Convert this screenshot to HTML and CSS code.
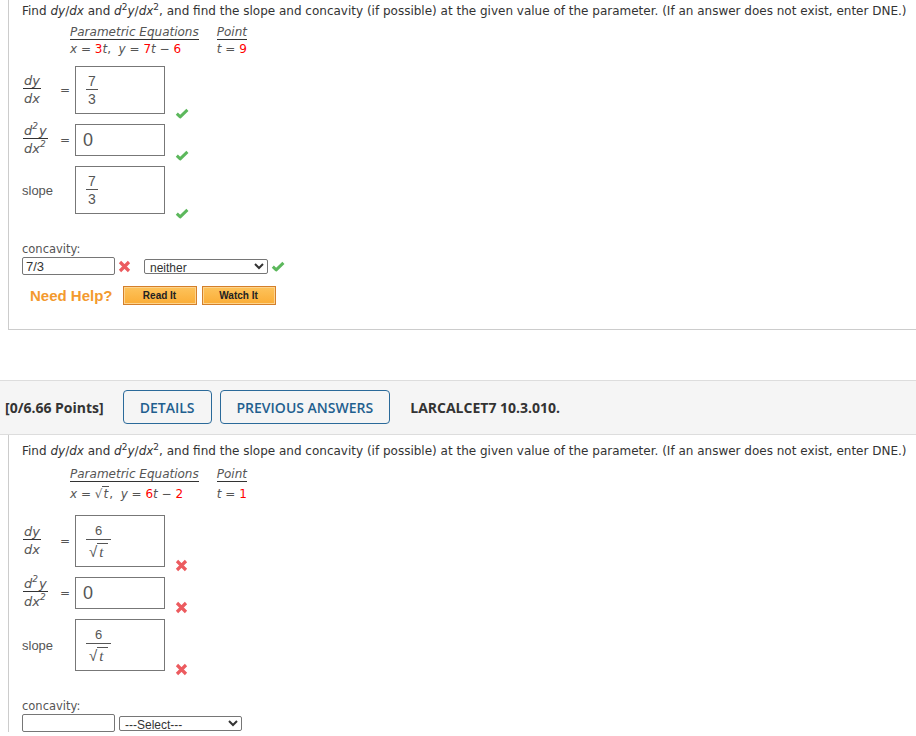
FILE: index.html
```html
<!DOCTYPE html>
<html lang="en">
<head>
  <meta charset="UTF-8">
  <meta name="viewport" content="width=device-width, initial-scale=1.0">
  <title>Parametric Equations</title>
  <link rel="stylesheet" href="styles.css">
</head>
<body>
  <!-- question 9 (answered) -->
  <div class="question first">
    <p class="prompt">Find <i>dy</i>/<i>dx</i> and <i>d</i><sup>2</sup><i>y</i>/<i>dx</i><sup>2</sup>, and find the slope and concavity (if possible) at the given value of the parameter. (If an answer does not exist, enter DNE.)</p>
    <div class="given">
      <span class="given-head">Parametric Equations</span>
      <span class="given-head">Point</span>
      <span class="given-val"><i>x</i> = <span class="red">3</span><i>t</i>,&nbsp; <i>y</i> = <span class="red">7</span><i>t</i> &minus; <span class="red">6</span></span>
      <span class="given-val"><i>t</i> = <span class="red">9</span></span>
    </div>

    <div class="answers">
      <div class="answer-row">
        <span class="label"><span class="frac"><span>dy</span><span class="den">dx</span></span></span>
        <span class="eq">=</span>
        <span class="box tall"><span class="box-frac"><span>7</span><span class="den">3</span></span></span>
        <span class="mark"><svg width="14" height="11" viewBox="0 0 14 11"><path d="M1.8 5.6 L5.2 8.8 L12.4 1.8" fill="none" stroke="#5cb85c" stroke-width="3" stroke-linejoin="round"/></svg></span>
      </div>
      <div class="answer-row">
        <span class="label"><span class="frac"><span>d<sup>2</sup>y</span><span class="den">dx<sup>2</sup></span></span></span>
        <span class="eq">=</span>
        <span class="box short"><span class="box-value">0</span></span>
        <span class="mark"><svg width="14" height="11" viewBox="0 0 14 11"><path d="M1.8 5.6 L5.2 8.8 L12.4 1.8" fill="none" stroke="#5cb85c" stroke-width="3" stroke-linejoin="round"/></svg></span>
      </div>
      <div class="answer-row">
        <span class="label slope">slope</span>
        <span class="box tall"><span class="box-frac"><span>7</span><span class="den">3</span></span></span>
        <span class="mark"><svg width="14" height="11" viewBox="0 0 14 11"><path d="M1.8 5.6 L5.2 8.8 L12.4 1.8" fill="none" stroke="#5cb85c" stroke-width="3" stroke-linejoin="round"/></svg></span>
      </div>
    </div>

    <div class="concavity">
      <div class="concavity-label">concavity:</div>
      <div class="concavity-row">
        <input class="text-input" type="text" value="7/3">
        <span class="cross"><svg width="13" height="13" viewBox="0 0 13 13"><path d="M2 2 L11 11 M11 2 L2 11" stroke="#ec5b5f" stroke-width="3.2"/></svg></span>
        <select class="select">
          <option>neither</option>
          <option>upward</option>
          <option>downward</option>
        </select>
        <span class="tick"><svg width="14" height="11" viewBox="0 0 14 11"><path d="M1.8 5.6 L5.2 8.8 L12.4 1.8" fill="none" stroke="#5cb85c" stroke-width="3" stroke-linejoin="round"/></svg></span>
      </div>
    </div>

    <div class="help">
      <span class="help-title">Need Help?</span>
      <button class="help-btn">Read It</button>
      <button class="help-btn">Watch It</button>
    </div>
  </div>

  <!-- question 10 header -->
  <div class="points-bar">
    <span class="points">[0/6.66 Points]</span>
    <button class="bar-btn">DETAILS</button>
    <button class="bar-btn">PREVIOUS ANSWERS</button>
    <span class="item-id">LARCALCET7 10.3.010.</span>
  </div>

  <div class="question second">
    <p class="prompt">Find <i>dy</i>/<i>dx</i> and <i>d</i><sup>2</sup><i>y</i>/<i>dx</i><sup>2</sup>, and find the slope and concavity (if possible) at the given value of the parameter. (If an answer does not exist, enter DNE.)</p>
    <div class="given">
      <span class="given-head">Parametric Equations</span>
      <span class="given-head">Point</span>
      <span class="given-val"><i>x</i> = <span class="sqrt">&radic;<span class="radicand"><i>t</i></span></span>,&nbsp; <i>y</i> = <span class="red">6</span><i>t</i> &minus; <span class="red">2</span></span>
      <span class="given-val"><i>t</i> = <span class="red">1</span></span>
    </div>

    <div class="answers">
      <div class="answer-row">
        <span class="label"><span class="frac"><span>dy</span><span class="den">dx</span></span></span>
        <span class="eq">=</span>
        <span class="box taller"><span class="box-frac root"><span>6</span><span class="den"><span class="sqrt">&radic;<span class="radicand">t</span></span></span></span></span>
        <span class="mark"><svg width="13" height="13" viewBox="0 0 13 13"><path d="M2 2 L11 11 M11 2 L2 11" stroke="#ec5b5f" stroke-width="3.2"/></svg></span>
      </div>
      <div class="answer-row">
        <span class="label"><span class="frac"><span>d<sup>2</sup>y</span><span class="den">dx<sup>2</sup></span></span></span>
        <span class="eq">=</span>
        <span class="box short"><span class="box-value">0</span></span>
        <span class="mark"><svg width="13" height="13" viewBox="0 0 13 13"><path d="M2 2 L11 11 M11 2 L2 11" stroke="#ec5b5f" stroke-width="3.2"/></svg></span>
      </div>
      <div class="answer-row">
        <span class="label slope">slope</span>
        <span class="box taller"><span class="box-frac root"><span>6</span><span class="den"><span class="sqrt">&radic;<span class="radicand">t</span></span></span></span></span>
        <span class="mark"><svg width="13" height="13" viewBox="0 0 13 13"><path d="M2 2 L11 11 M11 2 L2 11" stroke="#ec5b5f" stroke-width="3.2"/></svg></span>
      </div>
    </div>

    <div class="concavity">
      <div class="concavity-label">concavity:</div>
      <div class="concavity-row">
        <input class="text-input" type="text" value="">
        <select class="select narrow">
          <option>---Select---</option>
          <option>upward</option>
          <option>downward</option>
          <option>neither</option>
        </select>
      </div>
    </div>
  </div>
</body>
</html>
```

FILE: styles.css
```css
/* page */
body {
  margin: 0;
  font-family: "DejaVu Sans", Verdana, sans-serif;
  font-size: 12px;
  color: #333;
  background-color: #fff;
}

.question {
  margin-left: 8px;
  border-left: 1px solid #ccc;
  padding: 3px 0 0 13px;
}

.question.first {
  border-bottom: 1px solid #ccc;
  padding-bottom: 24px;
}

.question.second {
  padding-top: 8px;
}

.prompt {
  margin: 0;
  line-height: 16px;
  white-space: nowrap;
}

.prompt sup {
  font-size: 9px;
  line-height: 0;
  vertical-align: 5px;
}

.red {
  color: #f00;
}

/* given table */
.given {
  display: grid;
  grid-template-columns: auto auto;
  column-gap: 18px;
  width: max-content;
  margin: 6px 0 0 48px;
  font-size: 12px;
  line-height: 14px;
  color: #555;
}

.given-head {
  font-style: italic;
  border-bottom: 1px solid #333;
}

.given-val {
  padding-top: 2px;
}

.second .given {
  margin-top: 8px;
}

.second .given-val {
  padding-top: 5px;
}

.second .answers {
  margin-top: 14px;
}

.sqrt {
  white-space: nowrap;
}

.radicand {
  border-top: 1px solid #555;
  padding: 0 1px;
}

/* answer rows */
.answers {
  display: flex;
  flex-direction: column;
  gap: 10px;
  margin-top: 10px;
}

.answer-row {
  display: flex;
  align-items: center;
}

.label {
  width: 36px;
  color: #555;
}

.label.slope {
  width: 50px;
  font-family: "Liberation Sans", Arial, sans-serif;
  font-size: 13px;
}

.eq {
  width: 14px;
  text-align: center;
  color: #555;
}

.frac {
  display: inline-flex;
  flex-direction: column;
  align-items: center;
  font-style: italic;
  font-size: 13px;
  line-height: 14px;
  padding-left: 1px;
}

.frac sup {
  font-size: 9px;
  line-height: 0;
  vertical-align: 6px;
  margin-right: 1px;
}

.frac .den {
  align-self: stretch;
  text-align: center;
  border-top: 1px solid #333;
  padding: 3px 1px 0;
}

.box {
  display: flex;
  align-items: center;
  width: 88px;
  margin-left: 3px;
  border: 1px solid #777;
}

.box.short {
  height: 30px;
}

.box.tall {
  height: 46px;
}

.box.taller {
  height: 50px;
}

.box-frac {
  display: inline-flex;
  flex-direction: column;
  align-items: center;
  margin-left: 10px;
  font-family: "Liberation Sans", Arial, sans-serif;
  font-size: 14px;
  line-height: 16px;
  color: #555;
}

.box-frac .den {
  border-top: 1px solid #555;
  padding: 1px 2px 0;
}

.box-frac.root {
  font-size: 13px;
}

.box-frac.root .den {
  padding: 4px 3px 0;
  font-size: 15px;
  line-height: 16px;
}

.box-frac.root .radicand {
  padding: 0 5px 0 2px;
  font-family: "Liberation Serif", serif;
  font-style: italic;
  font-size: 15px;
}

.box-value {
  margin-left: 7px;
  font-family: "Liberation Sans", Arial, sans-serif;
  font-size: 18px;
  color: #555;
}

.mark {
  align-self: flex-end;
  margin: 0 0 -5px 10px;
  line-height: 0;
}

/* concavity */
.concavity {
  margin-top: 28px;
}

.concavity-label {
  font-size: 11.5px;
  line-height: 14px;
  color: #555;
  margin-bottom: 1px;
}

.concavity-row {
  display: flex;
  align-items: center;
}

.text-input {
  width: 93px;
  height: 18px;
  box-sizing: border-box;
  margin: 0;
  padding: 0 3px;
  border: 1px solid #767676;
  border-radius: 2px;
  font-family: "Liberation Sans", Arial, sans-serif;
  font-size: 13px;
  color: #333;
}

.cross,
.tick {
  margin-left: 3px;
  line-height: 0;
}

.select {
  width: 124px;
  height: 15px;
  box-sizing: border-box;
  margin: 0 0 0 13px;
  padding: 0 1px;
  border: 1px solid #767676;
  border-radius: 2px;
  background-color: #fff;
  font-family: "Liberation Sans", Arial, sans-serif;
  font-size: 12px;
  color: #333;
}

.select.narrow {
  width: 123px;
  margin-left: 4px;
}

/* need help */
.help {
  display: flex;
  align-items: center;
  margin-top: 11px;
  padding-left: 8px;
}

.help-title {
  margin-right: 10px;
  font-family: "Liberation Sans", Arial, sans-serif;
  font-size: 15px;
  font-weight: bold;
  color: #f39a2e;
}

.help-btn {
  width: 74px;
  height: 19px;
  box-sizing: border-box;
  margin-right: 5px;
  padding: 0;
  border: 1px solid #d47f2a;
  background: linear-gradient(#fdc35c, #fbad36);
  box-shadow: inset 0 0 0 1px #fdd48d;
  font-family: "Liberation Sans", Arial, sans-serif;
  font-size: 10px;
  font-weight: bold;
  color: #222;
}

/* points header */
.points-bar {
  display: flex;
  align-items: center;
  margin-top: 50px;
  padding: 9px 0 10px 5px;
  background-color: #f5f5f5;
  border-top: 1px solid #ddd;
  border-bottom: 1px solid #ddd;
  font-family: "Open Sans", sans-serif;
  font-size: 14px;
  color: #333;
}

.points {
  font-weight: 700;
  margin-right: 19px;
}

.bar-btn {
  height: 34px;
  box-sizing: border-box;
  margin-right: 8px;
  padding: 0 16px;
  border: 1px solid #2b6a9a;
  border-radius: 4px;
  background: transparent;
  font-family: "Open Sans", sans-serif;
  font-size: 14px;
  font-weight: 600;
  color: #1f5f8f;
}

.item-id {
  margin-left: 12px;
  font-weight: 700;
}
```
